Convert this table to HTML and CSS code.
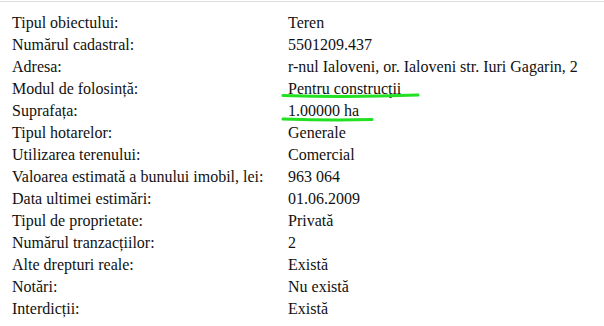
FILE: index.html
```html
<!DOCTYPE html>
<html lang="ro">
<head>
<meta charset="utf-8">
<link rel="stylesheet" href="styles.css">
</head>
<body>
<div class="page">
  <div class="rule"></div>
  <div class="info">
    <div class="k">Tipul obiectului:</div><div class="v">Teren</div>
    <div class="k">Numărul cadastral:</div><div class="v">5501209.437</div>
    <div class="k">Adresa:</div><div class="v">r-nul Ialoveni, or. Ialoveni str. Iuri Gagarin, 2</div>
    <div class="k">Modul de folosință:</div><div class="v">Pentru construcţii</div>
    <div class="k">Suprafața:</div><div class="v">1.00000 ha</div>
    <div class="k">Tipul hotarelor:</div><div class="v">Generale</div>
    <div class="k">Utilizarea terenului:</div><div class="v">Comercial</div>
    <div class="k">Valoarea estimată a bunului imobil, lei:</div><div class="v">963 064</div>
    <div class="k">Data ultimei estimări:</div><div class="v">01.06.2009</div>
    <div class="k">Tipul de proprietate:</div><div class="v">Privată</div>
    <div class="k">Numărul tranzacțiilor:</div><div class="v">2</div>
    <div class="k">Alte drepturi reale:</div><div class="v">Există</div>
    <div class="k">Notări:</div><div class="v">Nu există</div>
    <div class="k">Interdicții:</div><div class="v">Există</div>
  </div>
  <svg class="marks" width="604" height="326" viewBox="0 0 604 326">
    <path d="M283 95.5 Q 350 97.5 418 95" fill="none" stroke="#22e022" stroke-width="3" stroke-linecap="round"/>
    <path d="M283 119 Q 330 120.5 372 119.5" fill="none" stroke="#22e022" stroke-width="3" stroke-linecap="round"/>
  </svg>
</div>
</body>
</html>
```
FILE: styles.css
```css
html, body {
  margin: 0;
  padding: 0;
  background: #fff;
}
.page {
  position: relative;
  width: 604px;
  height: 326px;
  overflow: hidden;
  font-family: "Liberation Serif", "Times New Roman", serif;
  font-size: 16px;
  color: #111;
}
.rule {
  margin-top: 1px;
  height: 1px;
  background: #dcdcdc;
}
.info {
  display: grid;
  grid-template-columns: 276px 1fr;
  grid-auto-rows: 22px;
  line-height: 22px;
  padding: 10px 0 0 12px;
  white-space: nowrap;
}
.marks {
  position: absolute;
  left: 0;
  top: 0;
  pointer-events: none;
}
```
